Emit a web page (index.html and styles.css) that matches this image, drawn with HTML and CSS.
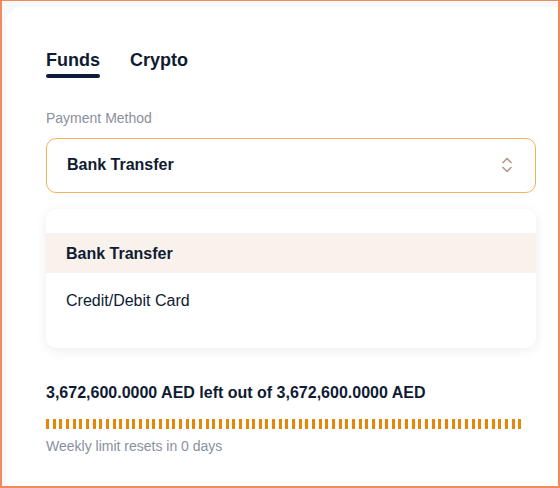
FILE: index.html
```html
<!DOCTYPE html>
<html lang="en">
<head>
    <meta charset="UTF-8">
    <meta name="viewport" content="width=device-width, initial-scale=1.0">
    <title>Withdraw</title>
    <link rel="stylesheet" href="styles.css">
</head>
<body>
    <div class="frame">
        <div class="card">
            <div class="tabs">
                <div class="tab active">Funds</div>
                <div class="tab">Crypto</div>
            </div>

            <label class="field-label">Payment Method</label>
            <div class="select">
                <span>Bank Transfer</span>
                <svg class="chevrons" width="12" height="18" viewBox="0 0 12 18">
                    <polyline points="2,6.5 6,2.5 10,6.5" fill="none" stroke="#b89b8c" stroke-width="1.7" stroke-linecap="round" stroke-linejoin="round"/>
                    <polyline points="2,11.5 6,15.5 10,11.5" fill="none" stroke="#b89b8c" stroke-width="1.7" stroke-linecap="round" stroke-linejoin="round"/>
                </svg>
            </div>

            <ul class="options">
                <li class="option selected">Bank Transfer</li>
                <li class="option">Credit/Debit Card</li>
            </ul>

            <div class="limit">3,672,600.0000 AED left out of 3,672,600.0000 AED</div>
            <div class="limit-bar"></div>
            <div class="limit-note">Weekly limit resets in 0 days</div>
        </div>
    </div>
</body>
</html>
```

FILE: styles.css
```css
html, body {
    margin: 0;
    height: 100%;
}

body {
    font-family: "Liberation Sans", Arial, sans-serif;
    color: #0f1b33;
}

.frame {
    box-sizing: border-box;
    height: 100%;
    border: 2px solid #f08a5d;
    border-top-width: 1px;
    background-color: #f7f8fa;
    padding: 6px 0 0 4px;
    display: flex;
}

.card {
    flex: 1;
    background-color: white;
    border-radius: 16px 0 0 0;
    padding: 41px 22px 0 40px;
}

.tabs {
    display: flex;
    gap: 30px;
}

.tab {
    position: relative;
    font-size: 18px;
    font-weight: bold;
    line-height: 24px;
    padding-bottom: 6px;
}

.tab.active::after {
    content: "";
    position: absolute;
    left: 0;
    right: 0;
    bottom: 0;
    height: 4px;
    border-radius: 2px;
    background-color: #0c1d3a;
}

.field-label {
    display: block;
    margin-top: 30px;
    font-size: 14px;
    line-height: 20px;
    color: #8b909a;
}

.select {
    margin-top: 10px;
    height: 55px;
    box-sizing: border-box;
    border: 1px solid #f5b05a;
    border-radius: 10px;
    display: flex;
    align-items: center;
    justify-content: space-between;
    padding: 0 22px 1px 20px;
    font-size: 16px;
    font-weight: bold;
}

.options {
    list-style: none;
    margin: 16px 0 0;
    padding: 24px 0 19px;
    border-radius: 10px;
    background-color: white;
    box-shadow: 0 2px 12px rgba(0,0,0,0.08);
}

.option {
    padding: 0 20px;
    font-size: 16px;
    line-height: 20px;
}

.option.selected {
    font-weight: bold;
    background-color: #f8f1ec;
    padding-top: 11px;
    padding-bottom: 9px;
}

.option + .option {
    padding-top: 18px;
    padding-bottom: 18px;
}

.limit {
    margin-top: 35px;
    font-size: 16px;
    font-weight: bold;
    line-height: 20px;
}

.limit-bar {
    margin-top: 16px;
    height: 10px;
    width: 479px;
    background: repeating-linear-gradient(90deg, #e8860c 0 3px, transparent 3px 6.65px);
}

.limit-note {
    margin-top: 7px;
    font-size: 14px;
    line-height: 20px;
    color: #8a8f9e;
}
```
